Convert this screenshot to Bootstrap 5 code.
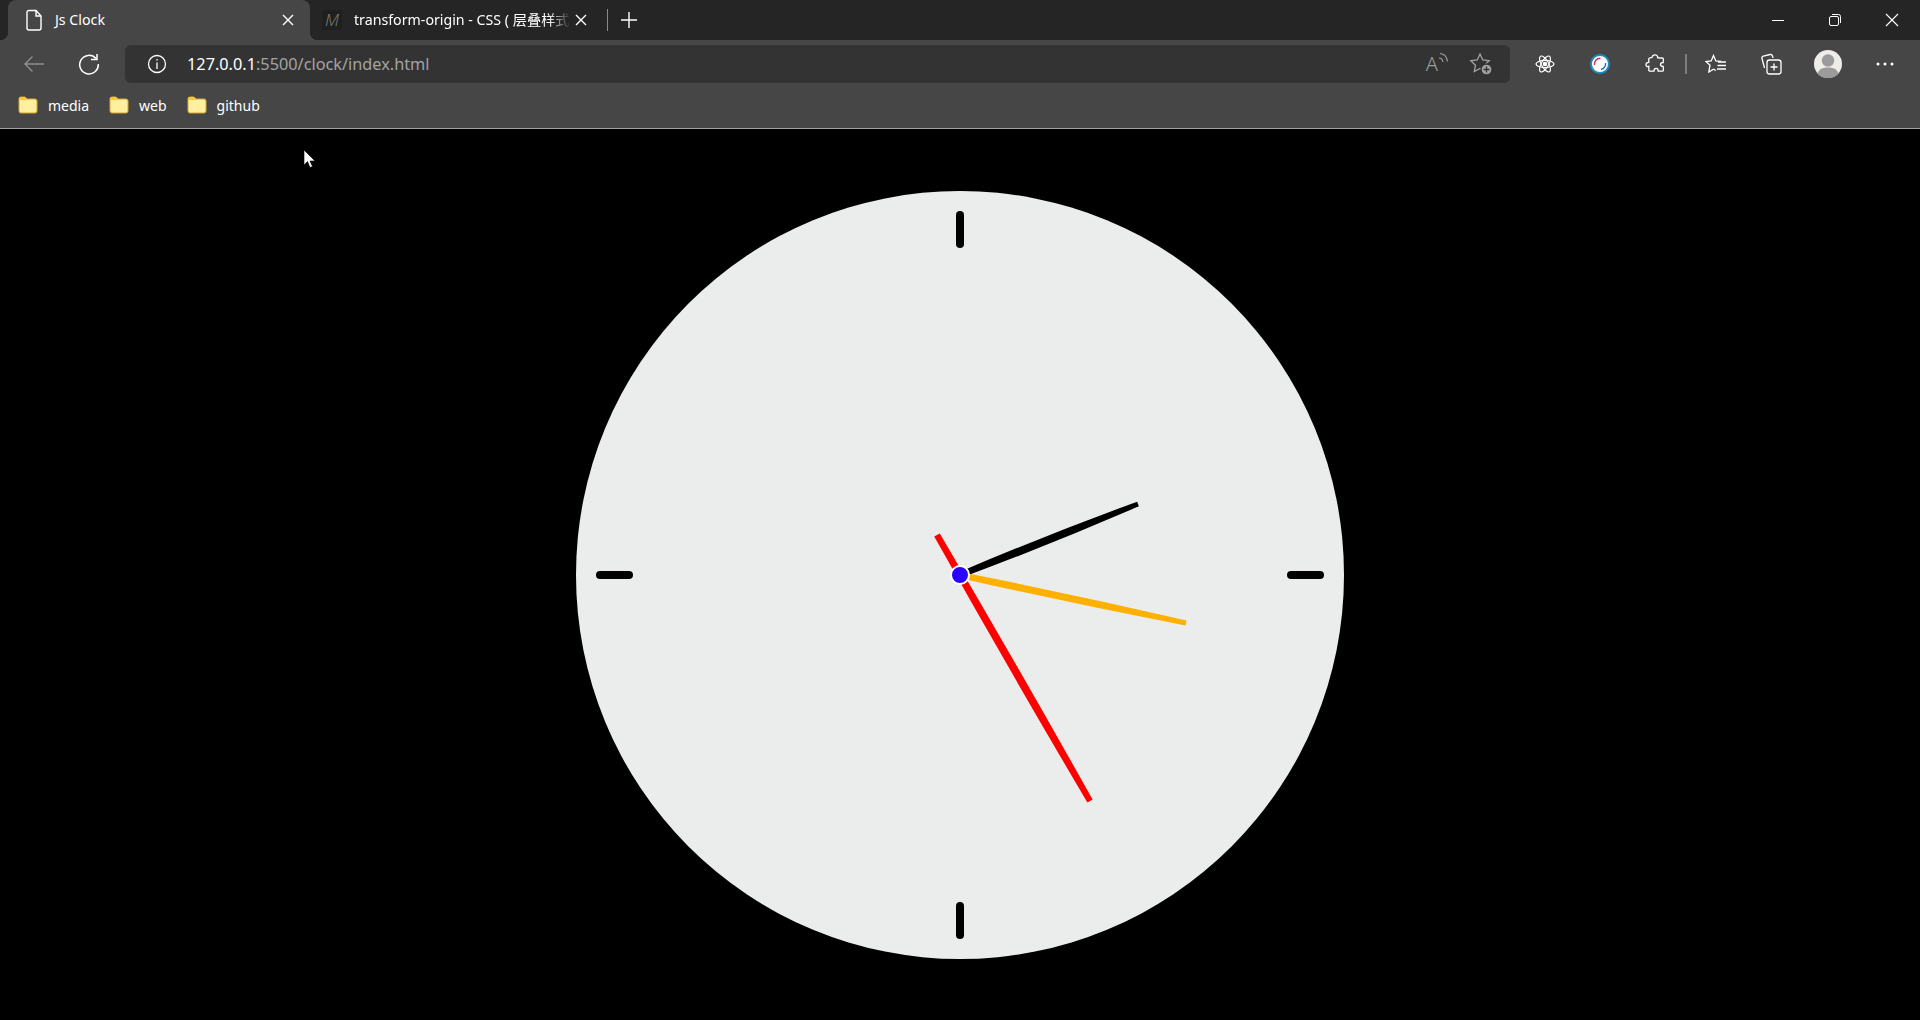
<!doctype html>
<html lang="en">
  <head>
    <meta charset="UTF-8" />
    <meta name="viewport" content="width=device-width, initial-scale=1.0" />
    <title>Js Clock</title>
    <!-- Bootstrap CSS -->
    <link
      href="https://cdn.jsdelivr.net/npm/bootstrap@5.3.0/dist/css/bootstrap.min.css"
      rel="stylesheet"
    />
    <style>
      body {
        font-family: "Noto Sans", "Noto Sans CJK SC", sans-serif;
        background-color: #000;
        color: #fff;
        overflow: hidden;
      }

      .tab-strip {
        height: 40px;
        background-color: #252525;
        padding-left: 8px;
      }

      .tab-active {
        position: relative;
        width: 302px;
        background-color: #464646;
        border-radius: 8px 8px 0 0;
        padding-left: 16px;
      }

      .tab-active::before,
      .tab-active::after {
        content: "";
        position: absolute;
        bottom: 0;
        width: 8px;
        height: 8px;
      }

      .tab-active::before {
        left: -8px;
        background: radial-gradient(circle at 0 0, #252525 8px, #464646 8.5px);
      }

      .tab-active::after {
        right: -8px;
        background: radial-gradient(circle at 100% 0, #252525 8px, #464646 8.5px);
      }

      .tab-other {
        width: 297px;
        padding-left: 12px;
      }

      .tab-title {
        font-size: 14.2px;
        white-space: nowrap;
      }

      .tab-active .tab-title {
        margin-left: 11px;
        width: 227px;
      }

      .tab-other .tab-title {
        margin-left: 12px;
        width: 221px;
        -webkit-mask-image: linear-gradient(to right, #000 88%, transparent 98%);
        mask-image: linear-gradient(to right, #000 88%, transparent 98%);
      }

      .mdn-mark {
        width: 20px;
        height: 20px;
        background-color: #1f1f1f;
        color: #777;
        font-size: 17px;
        font-style: italic;
        font-weight: 300;
        line-height: 20px;
        text-align: center;
      }

      .tab-divider {
        width: 1px;
        height: 22px;
        background-color: #8a8a8a;
      }

      .tab-plus {
        margin-left: 12px;
      }

      .win-btn {
        width: 57px;
      }

      .tool-bar {
        height: 48px;
        background-color: #464646;
        padding: 0 13px 0 12px;
        gap: 11px;
      }

      .tool-slot {
        width: 44px;
        flex-shrink: 0;
      }

      .tool-rule {
        width: 2px;
        height: 20px;
        background-color: #7e7e7e;
        margin: 0 -4px 0 -3px;
      }

      .addr-box {
        height: 38px;
        background-color: #333;
        border-radius: 6px;
        margin: 0 2px 0 3px;
        padding: 0 17px 0 22px;
      }

      .addr-url {
        font-size: 16.3px;
        color: #a3a3a3;
        margin-left: 20px;
      }

      .addr-host {
        color: #fff;
      }

      .read-aloud {
        color: #9d9d9d;
        font-size: 20px;
        font-weight: 300;
        line-height: 1;
      }

      .fav-add {
        margin-left: 20px;
      }

      .avatar-slot {
        margin-left: 2px;
      }

      .more-slot {
        margin-left: 2px;
      }

      .mark-bar {
        height: 41px;
        background-color: #464646;
        border-bottom: 1px solid #a2a2a2;
        padding-left: 18px;
        font-size: 14px;
      }

      .mark-item {
        margin-right: 20px;
        padding-bottom: 6px;
        gap: 10px;
      }

      .clock-area {
        padding-top: 62px;
      }

      .clock-face {
        width: 768px;
        height: 768px;
        background-color: #ebeded;
      }

      .mouse-arrow {
        position: absolute;
        left: 303px;
        top: 149px;
      }
    </style>
  </head>

  <body>
    <div class="vh-100 d-flex flex-column">
      <!-- Tabs -->
      <div class="tab-strip d-flex align-items-stretch flex-shrink-0">
        <div class="tab-active d-flex align-items-center">
          <svg width="20" height="22" viewBox="0 0 20 22" fill="none" stroke="#fff" stroke-width="1.4">
            <path d="M3 3.5a2 2 0 0 1 2-2h7l5 5.500v12a2 2 0 0 1-2 2H5a2 2 0 0 1-2-2z" />
            <path d="M12 1.500V7h5" />
          </svg>
          <div class="tab-title">Js Clock</div>
          <svg width="12" height="12" viewBox="0 0 12 12" stroke="#fff" stroke-width="1.400">
            <path d="M1 1l10 10M11 1L1 11" />
          </svg>
        </div>
        <div class="tab-other d-flex align-items-center">
          <div class="mdn-mark flex-shrink-0">M</div>
          <div class="tab-title">transform-origin - CSS ( 层叠样式</div>
          <svg width="12" height="12" viewBox="0 0 12 12" stroke="#fff" stroke-width="1.400">
            <path d="M1 1l10 10M11 1L1 11" />
          </svg>
        </div>
        <div class="d-flex align-items-center">
          <div class="tab-divider"></div>
          <svg width="18" height="18" viewBox="0 0 18 18" stroke="#fff" stroke-width="1.400" class="tab-plus">
            <path d="M9 1v16M1 9h16" />
          </svg>
        </div>
        <div class="d-flex ms-auto">
          <div class="win-btn d-flex align-items-center justify-content-center">
            <svg width="14" height="14" viewBox="0 0 14 14" stroke="#fff"><path d="M1 7.500h12" /></svg>
          </div>
          <div class="win-btn d-flex align-items-center justify-content-center">
            <svg width="14" height="14" viewBox="0 0 14 14" fill="none" stroke="#fff">
              <rect x="1.500" y="3.500" width="9" height="9" rx="1.500" />
              <path d="M4 1.500h6.500a2 2 0 0 1 2 2V10" />
            </svg>
          </div>
          <div class="win-btn d-flex align-items-center justify-content-center">
            <svg width="14" height="14" viewBox="0 0 14 14" stroke="#fff" stroke-width="1.100"><path d="M1 1l12 12M13 1L1 13" /></svg>
          </div>
        </div>
      </div>

      <!-- Address bar -->
      <div class="tool-bar d-flex align-items-center flex-shrink-0">
        <div class="tool-slot d-flex justify-content-center">
          <svg width="22" height="18" viewBox="0 0 22 18" fill="none" stroke="#8f8f8f" stroke-width="1.400">
            <path d="M21 9H2M9.500 1.500L2 9l7.500 7.500" />
          </svg>
        </div>
        <div class="tool-slot d-flex justify-content-center">
          <svg width="22" height="22" viewBox="0 0 22 22" fill="none" stroke="#fff" stroke-width="1.500">
            <path d="M18 5.500A9.300 9.300 0 1 0 20.300 11" />
            <path d="M19 1v5.500h-6" />
          </svg>
        </div>
        <div class="addr-box d-flex align-items-center flex-grow-1">
          <svg width="20" height="20" viewBox="0 0 20 20" fill="none" stroke="#fff" stroke-width="1.300">
            <circle cx="10" cy="10" r="8.500" />
            <path d="M10 8.500V15M10 5v1.600" />
          </svg>
          <div class="addr-url"><span class="addr-host">127.0.0.1</span>:5500/clock/index.html</div>
          <div class="ms-auto d-flex align-items-center">
            <span class="read-aloud">A</span>
            <svg width="11" height="16" viewBox="0 0 11 16" fill="none" stroke="#9d9d9d" stroke-width="1.200" class="align-self-start">
              <path d="M1 6c2 0 3.500 1.500 4 4M2 1.500c4 .5 7 3.500 7.500 8" />
            </svg>
            <svg width="24" height="24" viewBox="0 0 24 24" fill="none" stroke="#a2a2a2" stroke-width="1.300" class="fav-add">
              <path d="M11 2l2.800 6 6.400.8-4.700 4.400 1.200 6.400-5.700-3.200-5.700 3.200 1.200-6.400L1.800 8.800 8.200 8z" />
              <circle cx="17.500" cy="17.500" r="5.500" fill="#a2a2a2" stroke="#333" />
              <path d="M17.500 14.500v6M14.500 17.500h6" stroke="#333" />
            </svg>
          </div>
        </div>
        <div class="tool-slot d-flex justify-content-center">
          <svg width="20" height="20" viewBox="0 0 20 20" fill="none" stroke="#fff" stroke-width="1.200">
            <ellipse cx="10" cy="10" rx="9" ry="3.600" />
            <ellipse cx="10" cy="10" rx="9" ry="3.600" transform="rotate(60 10 10)" />
            <ellipse cx="10" cy="10" rx="9" ry="3.600" transform="rotate(120 10 10)" />
            <circle cx="10" cy="10" r="1.700" fill="#fff" />
          </svg>
        </div>
        <div class="tool-slot d-flex justify-content-center">
          <svg width="20" height="20" viewBox="0 0 20 20" fill="#fff">
            <circle cx="10" cy="10" r="9" stroke="#1c8cc0" stroke-width="2" />
            <path d="M4.500 11A5.600 5.600 0 0 1 10.500 4.400" fill="none" stroke="#e2304a" stroke-width="1.500" />
            <path d="M15.500 9A5.600 5.600 0 0 1 11 15.500" fill="none" stroke="#2a6fb0" stroke-width="1.500" />
          </svg>
        </div>
        <div class="tool-slot d-flex justify-content-center">
          <svg width="20" height="20" viewBox="0 0 20 20" fill="none" stroke="#fff" stroke-width="1.300">
            <path d="M7 3.500a3 3 0 0 1 5.500-1.200c.3.500.2 1 .2 1.500l4.500.2c.8 0 1.200.500 1.200 1.200l-.2 3.300c-1 0-2.700.2-2.700 2s1.700 2 2.700 2l.2 3.400c0 .7-.5 1.200-1.200 1.200h-4c0-1.200-.5-2.700-2-2.700s-2.200 1.500-2.200 2.700H5c-.7 0-1.200-.5-1.200-1.200v-3.700C2.500 13.200 1 12.500 1 10.800s1.500-2.400 2.800-2.400V5c0-.7.5-1.200 1.200-1.200z" />
          </svg>
        </div>
        <div class="tool-rule"></div>
        <div class="tool-slot d-flex justify-content-center">
          <svg width="22" height="20" viewBox="0 0 22 20" fill="none" stroke="#fff" stroke-width="1.300">
            <path d="M16 7.500L10.800 7 8.500 1.500 6.200 7 1 7.500l4 3.700L3.800 18l4.700-2.800 2.500 1.300" />
            <path d="M13 8h8M12.500 11.500H21M12 15h9" />
          </svg>
        </div>
        <div class="tool-slot d-flex justify-content-center">
          <svg width="22" height="22" viewBox="0 0 22 22" fill="none" stroke="#fff" stroke-width="1.300">
            <rect x="7" y="7" width="14" height="14" rx="2.500" />
            <path d="M14 10.500v7M10.500 14h7" />
            <path d="M4.500 15L2 5.500c-.3-1.200.2-2 1.300-2.300L10 1.500c1.500-.3 2.500.5 3 3.500" />
          </svg>
        </div>
        <div class="tool-slot avatar-slot d-flex justify-content-center">
          <svg width="28" height="28" viewBox="0 0 28 28">
            <circle cx="14" cy="14" r="14" fill="#efede9" />
            <circle cx="14" cy="10.500" r="6.200" fill="#9b9b9b" />
            <path d="M3.500 23.500C5 19 9 17.500 14 17.500S23 19 24.500 23.500A14 14 0 0 1 3.500 23.500z" fill="#9b9b9b" />
          </svg>
        </div>
        <div class="tool-slot more-slot d-flex justify-content-center">
          <svg width="18" height="4" viewBox="0 0 18 4" fill="#fff">
            <circle cx="2" cy="2" r="1.500" />
            <circle cx="9" cy="2" r="1.500" />
            <circle cx="16" cy="2" r="1.500" />
          </svg>
        </div>
      </div>

      <!-- Bookmarks -->
      <div class="mark-bar d-flex align-items-center flex-shrink-0">
        <div class="mark-item d-flex align-items-center">
          <svg width="20" height="18" viewBox="0 0 20 18">
            <path d="M1 3a2 2 0 0 1 2-2h4l2 2h8a2 2 0 0 1 2 2v10a2 2 0 0 1-2 2H3a2 2 0 0 1-2-2z" fill="#ffef9e" stroke="#d6a72c" />
            <path d="M1 3a2 2 0 0 1 2-2h4l2 2v1H1z" fill="#f5c73e" />
          </svg>
          <span>media</span>
        </div>
        <div class="mark-item d-flex align-items-center">
          <svg width="20" height="18" viewBox="0 0 20 18">
            <path d="M1 3a2 2 0 0 1 2-2h4l2 2h8a2 2 0 0 1 2 2v10a2 2 0 0 1-2 2H3a2 2 0 0 1-2-2z" fill="#ffef9e" stroke="#d6a72c" />
            <path d="M1 3a2 2 0 0 1 2-2h4l2 2v1H1z" fill="#f5c73e" />
          </svg>
          <span>web</span>
        </div>
        <div class="mark-item d-flex align-items-center">
          <svg width="20" height="18" viewBox="0 0 20 18">
            <path d="M1 3a2 2 0 0 1 2-2h4l2 2h8a2 2 0 0 1 2 2v10a2 2 0 0 1-2 2H3a2 2 0 0 1-2-2z" fill="#ffef9e" stroke="#d6a72c" />
            <path d="M1 3a2 2 0 0 1 2-2h4l2 2v1H1z" fill="#f5c73e" />
          </svg>
          <span>github</span>
        </div>
      </div>

      <!-- Clock -->
      <div class="clock-area flex-grow-1 d-flex justify-content-center align-items-start">
        <div class="clock-face rounded-circle">
          <svg width="768" height="768" viewBox="0 0 768 768" class="d-block">
            <g fill="#000">
              <rect x="380" y="20" width="8" height="37" rx="4" />
              <rect x="380" y="711" width="8" height="37" rx="4" />
              <rect x="20" y="380" width="37" height="8" rx="4" />
              <rect x="711" y="380" width="37" height="8" rx="4" />
            </g>
            <!-- hands are a bit fatter in the middle than at the ends -->
            <path d="M385.100 386.800Q474.900 353.400 562.900 315.300L561.100 310.700Q471.100 343.600 382.900 381.200z" fill="#000" />
            <path d="M383.400 386.900Q496 412.700 609.500 434.400L610.500 429.600Q498 403.300 384.600 381.100z" fill="#ffb000" />
            <path d="M358.200 345.600Q433.400 479.300 511.400 611.500L516.600 608.500Q441.600 474.700 363.800 342.400z" fill="#f00" />
            <circle cx="384" cy="384" r="9" fill="#2a00ff" stroke="#fff" stroke-width="2" />
          </svg>
        </div>
      </div>
    </div>

    <svg class="mouse-arrow" width="14" height="20" viewBox="0 0 14 20">
      <path d="M1 1v15l3.500-3.500 2.500 6 2.500-1-2.500-5.500h5z" fill="#fff" stroke="#000" stroke-width="0.600" />
    </svg>

    <!-- Bootstrap JS -->
    <script src="https://cdn.jsdelivr.net/npm/bootstrap@5.3.0/dist/js/bootstrap.bundle.min.js"></script>
  </body>
</html>
